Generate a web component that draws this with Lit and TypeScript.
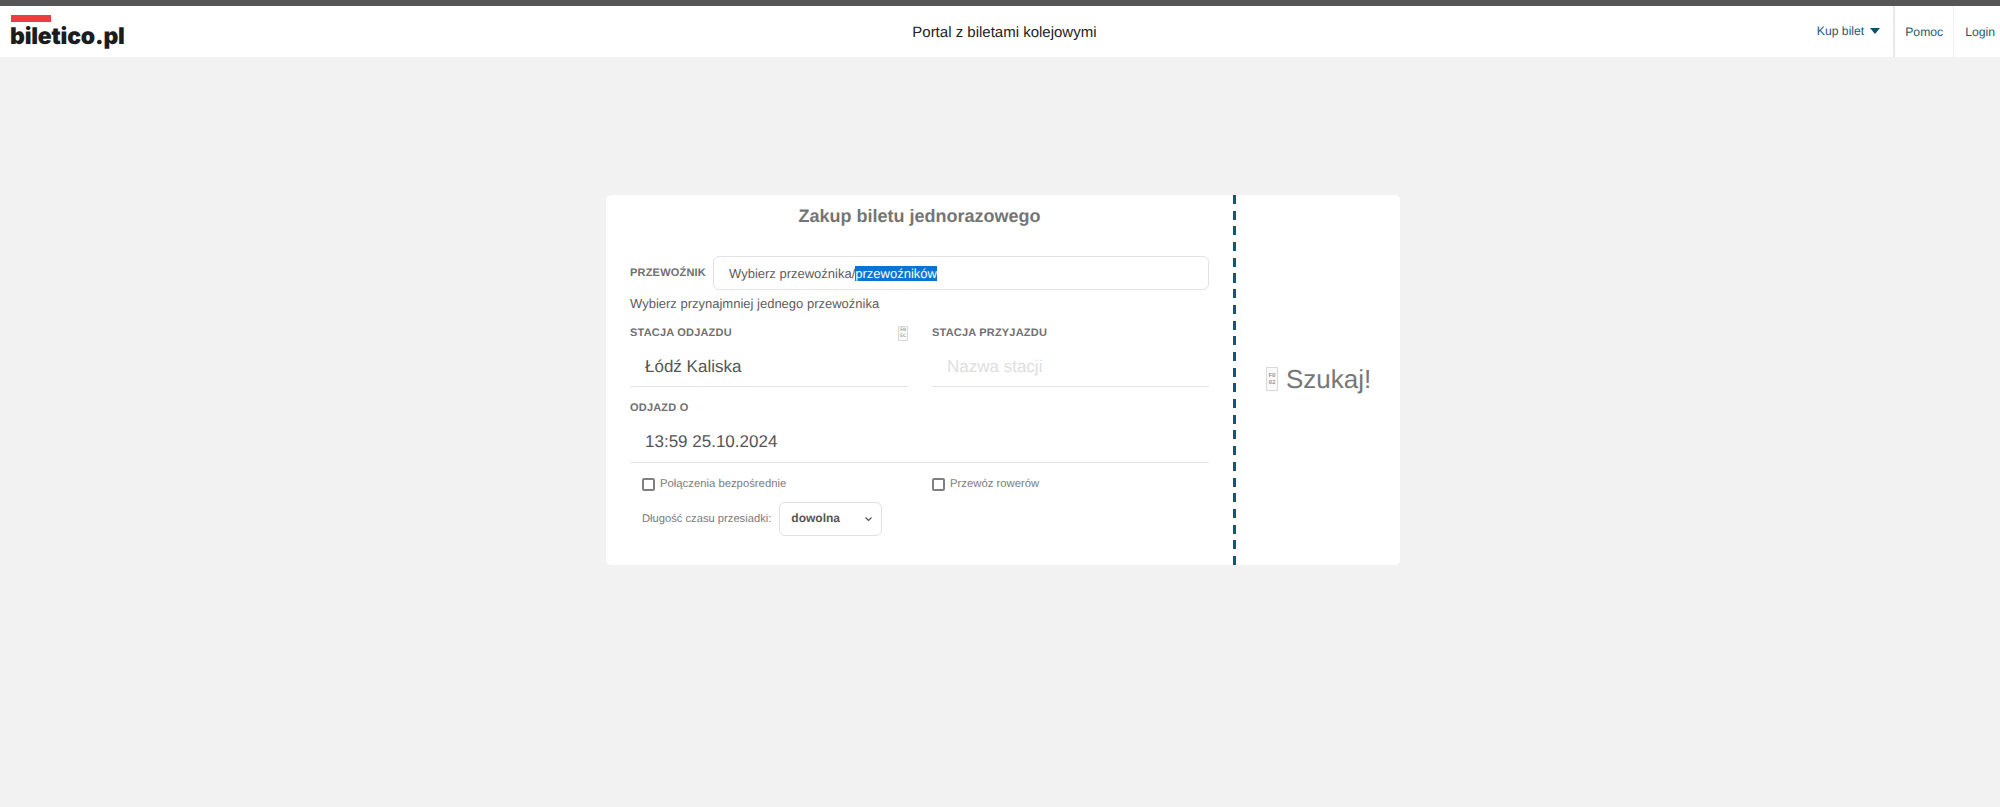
import { LitElement, html, css } from "lit";
import { customElement } from "lit/decorators.js";

@customElement("app-root")
export class AppRoot extends LitElement {
  static styles = css`
    :host { display: block; min-height: 807px; background: #f2f2f2; font-family: "Liberation Sans", Arial, sans-serif; color: #5c5c5c; text-rendering: geometricPrecision; }
    * { box-sizing: border-box; }
    .nav { height: 57px; background: #fff; border-top: 6px solid #565656; display: flex; align-items: stretch; }
    .brand { width: 300px; padding: 9px 0 0 11px; }
    .logo-bar { width: 40px; height: 7px; background: #ec3d45; }
    .logo { font-family: Inter, "Liberation Sans", sans-serif; font-weight: 900; font-size: 23px; line-height: 24px; letter-spacing: -0.2px; color: #1c1c1c; margin: 2px 0 0 -1px; }
    .title { flex: 1; display: flex; align-items: center; justify-content: center; font-size: 15px; color: #222; padding: 1px 108px 0 0; }
    .menu { display: flex; font-size: 12.2px; color: #1a5a72; }
    .menu-item { display: flex; align-items: center; padding: 1px 11px 0; border-left: 1px solid #f0f0f0; }
    .menu-item.first { border-left: 0; padding: 0 13px 1px 0; }
    .menu-item.strong { border-left: 2px solid #e8e8e8; padding: 1px 10px 0; }
    .menu-item.last { padding: 1px 5px 0 11px; }
    .caret { width: 0; height: 0; margin-left: 6px; border: 5px solid transparent; border-top: 6px solid #0e4f67; border-bottom: 0; }
    .main { display: flex; justify-content: center; padding-top: 138px; }
    .card { width: 794px; height: 370px; margin-left: 6px; background: #fff; border-radius: 5px; display: flex; }
    .form { flex: none; width: 627px; padding: 0 24px; }
    .divider { flex: none; width: 3px; background: repeating-linear-gradient(to bottom, #0e5a76 0 9px, transparent 9px 15.7px); }
    h1 { margin: 0; padding-top: 10px; height: 61px; font-size: 18px; line-height: 23px; font-weight: 700; color: #757575; text-align: center; }
    .carrier { display: flex; align-items: center; }
    .label { font-size: 11px; font-weight: 700; color: #707070; letter-spacing: 0.2px; }
    .carrier .label { width: 83px; flex: none; }
    .select-box { flex: 1; height: 34px; border: 1px solid #e2e2e2; border-radius: 6px; padding-left: 15px; display: flex; align-items: center; font-size: 13px; color: #5c5c5c; }
    .sel { background: #0a74d6; color: #fff; }
    .help { font-size: 13px; line-height: 16px; margin-top: 6px; color: #5c5c5c; }
    .cols { display: grid; grid-template-columns: 278px 277px; gap: 24px; margin-top: 13px; }
    .col-head { display: flex; justify-content: space-between; align-items: center; height: 16px; }
    .missing { border: 1px solid #d8d8d8; background: #fafafa; color: #777; font-family: "Liberation Mono", monospace; font-size: 5px; line-height: 6px; width: 10px; height: 15px; display: inline-flex; align-items: center; justify-content: center; text-align: center; letter-spacing: -0.2px; }
    .field { height: 46px; border-bottom: 1px solid #e4e4e4; padding: 6px 0 0 15px; display: flex; align-items: center; font-size: 17px; color: #555; }
    .field.empty { color: #dedede; }
    .full { margin-top: 13px; width: 579px; }
    .full .field { height: 47px; }
    .checks { display: grid; grid-template-columns: 302px 1fr; padding-left: 12px; margin-top: 13px; font-size: 11.3px; color: #7c7c7c; }
    .check { display: flex; align-items: center; gap: 5px; height: 16px; }
    .box { width: 13px; height: 13px; border: 2px solid #808080; border-radius: 2px; }
    .check.right { margin-left: -12px; }
    .dur { display: flex; align-items: center; gap: 8px; padding-left: 12px; margin-top: 10px; font-size: 11.2px; color: #7c7c7c; }
    .dd { width: 103px; height: 34px; border: 1px solid #e0e0e0; border-radius: 6px; display: flex; align-items: center; justify-content: space-between; padding: 0 8px 2px 11px; font-size: 12px; font-weight: 700; color: #555; }
    .dd svg { margin-top: 2px; }
    .side { flex: 1; display: flex; align-items: center; padding: 0 0 2px 30px; gap: 8px; font-size: 26px; color: #777; }
    .side .missing { width: 12px; height: 24px; font-size: 6px; line-height: 7px; }
  `;

  render() {
    return html`
      <div class="nav">
        <div class="brand">
          <div class="logo-bar"></div>
          <div class="logo">biletico.pl</div>
        </div>
        <div class="title">Portal z biletami kolejowymi</div>
        <div class="menu">
          <div class="menu-item first">Kup bilet<span class="caret"></span></div>
          <div class="menu-item strong">Pomoc</div>
          <div class="menu-item last">Login</div>
        </div>
      </div>
      <div class="main">
        <div class="card">
          <div class="form">
            <h1>Zakup biletu jednorazowego</h1>
            <div class="carrier">
              <span class="label">PRZEWOŹNIK</span>
              <div class="select-box">Wybierz przewoźnika/<span class="sel">przewoźników</span></div>
            </div>
            <div class="help">Wybierz przynajmniej jednego przewoźnika</div>
            <div class="cols">
              <div>
                <div class="col-head"><span class="label">STACJA ODJAZDU</span><span class="missing">F0<br />EC</span></div>
                <div class="field">Łódź Kaliska</div>
              </div>
              <div>
                <div class="col-head"><span class="label">STACJA PRZYJAZDU</span></div>
                <div class="field empty">Nazwa stacji</div>
              </div>
            </div>
            <div class="full">
              <div class="col-head"><span class="label">ODJAZD O</span></div>
              <div class="field">13:59 25.10.2024</div>
            </div>
            <div class="checks">
              <div class="check"><span class="box"></span>Połączenia bezpośrednie</div>
              <div class="check right"><span class="box"></span>Przewóz rowerów</div>
            </div>
            <div class="dur">
              <span>Długość czasu przesiadki:</span>
              <div class="dd">dowolna
                <svg width="9" height="6" viewBox="0 0 9 6"><path d="M1.5 1.5l3 3 3-3" fill="none" stroke="#555" stroke-width="1.2" /></svg>
              </div>
            </div>
          </div>
          <div class="divider"></div>
          <div class="side"><span class="missing">F0<br />02</span>Szukaj!</div>
        </div>
      </div>
    `;
  }
}
